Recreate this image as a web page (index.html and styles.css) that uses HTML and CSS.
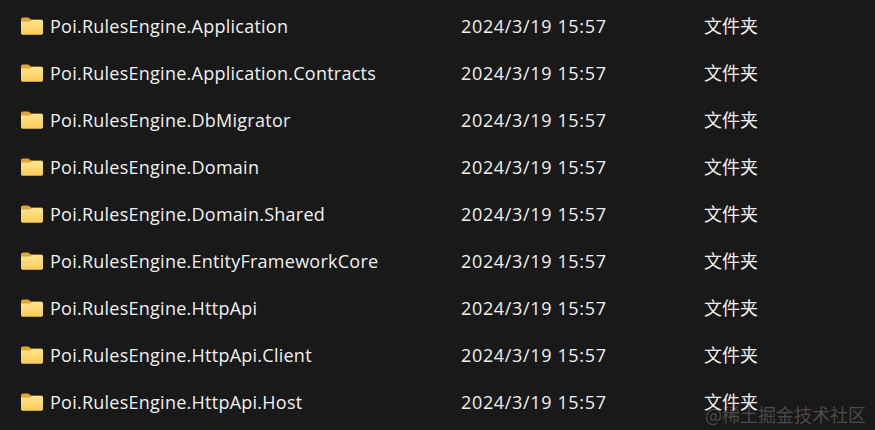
FILE: index.html
```html
<!DOCTYPE html>
<html lang="zh-CN">

<head>
    <meta charset="UTF-8">
    <title>Folder list</title>
    <link rel="stylesheet" href="styles.css">
</head>

<body>
    <svg class="defs" width="0" height="0">
        <defs>
            <linearGradient id="folderFront" x1="0" y1="0" x2="0" y2="1">
                <stop offset="0" stop-color="#ffe58f"/>
                <stop offset="1" stop-color="#fbcb58"/>
            </linearGradient>
        </defs>
        <symbol id="folder" viewBox="0 0 22 18">
            <path fill="#e2a52f" d="M0 2.5C0 1.4.8.6 1.9.6h5c.6 0 1.1.2 1.5.6L10 2.6h10.2c1 0 1.8.8 1.8 1.8v2H0z"/>
            <path fill="url(#folderFront)" d="M0 4.6h8.2c.6 0 1.1-.2 1.5-.5l1.4-1.1h9c1 0 1.9.8 1.9 1.8v11.1c0 1-.9 1.8-1.900 1.800H1.900C.8 17.700 0 16.900 0 15.900z"/>
        </symbol>
    </svg>

    <div class="list">
        <div class="row">
            <div class="name"><svg class="icon"><use href="#folder"/></svg>Poi.RulesEngine.Application</div>
            <div class="date">2024/3/19 15:57</div>
            <div class="type">文件夹</div>
        </div>
        <div class="row">
            <div class="name"><svg class="icon"><use href="#folder"/></svg>Poi.RulesEngine.Application.Contracts</div>
            <div class="date">2024/3/19 15:57</div>
            <div class="type">文件夹</div>
        </div>
        <div class="row">
            <div class="name"><svg class="icon"><use href="#folder"/></svg>Poi.RulesEngine.DbMigrator</div>
            <div class="date">2024/3/19 15:57</div>
            <div class="type">文件夹</div>
        </div>
        <div class="row">
            <div class="name"><svg class="icon"><use href="#folder"/></svg>Poi.RulesEngine.Domain</div>
            <div class="date">2024/3/19 15:57</div>
            <div class="type">文件夹</div>
        </div>
        <div class="row">
            <div class="name"><svg class="icon"><use href="#folder"/></svg>Poi.RulesEngine.Domain.Shared</div>
            <div class="date">2024/3/19 15:57</div>
            <div class="type">文件夹</div>
        </div>
        <div class="row">
            <div class="name"><svg class="icon"><use href="#folder"/></svg>Poi.RulesEngine.EntityFrameworkCore</div>
            <div class="date">2024/3/19 15:57</div>
            <div class="type">文件夹</div>
        </div>
        <div class="row">
            <div class="name"><svg class="icon"><use href="#folder"/></svg>Poi.RulesEngine.HttpApi</div>
            <div class="date">2024/3/19 15:57</div>
            <div class="type">文件夹</div>
        </div>
        <div class="row">
            <div class="name"><svg class="icon"><use href="#folder"/></svg>Poi.RulesEngine.HttpApi.Client</div>
            <div class="date">2024/3/19 15:57</div>
            <div class="type">文件夹</div>
        </div>
        <div class="row">
            <div class="name"><svg class="icon"><use href="#folder"/></svg>Poi.RulesEngine.HttpApi.Host</div>
            <div class="date">2024/3/19 15:57</div>
            <div class="type">文件夹</div>
        </div>
    </div>

    <div class="watermark">@稀土掘金技术社区</div>
</body>

</html>
```

FILE: styles.css
```css
html,
body {
    height: 100%;
}

body {
    margin: 0;
    background-color: #191919;
    color: #f0f0f0;
    font-family: "Open Sans", "Noto Sans CJK SC", sans-serif;
    font-size: 18px;
    overflow: hidden;
}

.defs {
    position: absolute;
}

.list {
    padding-top: 2px;
}

.row {
    display: grid;
    grid-template-columns: 461px 243px 1fr;
    height: 47px;
    align-items: center;
}

.name {
    display: flex;
    align-items: center;
    padding-left: 21px;
    letter-spacing: 0.25px;
}

.icon {
    width: 22px;
    height: 18px;
    margin-right: 7px;
}

.date {
    letter-spacing: 0.65px;
}

.type {
    font-family: "Noto Sans CJK SC", sans-serif;
    margin-bottom: 2px;
}

.watermark {
    position: absolute;
    right: 9px;
    bottom: 3px;
    color: rgba(255, 255, 255, 0.22);
    font-family: "Noto Sans CJK SC", sans-serif;
    font-size: 18px;
}
```
